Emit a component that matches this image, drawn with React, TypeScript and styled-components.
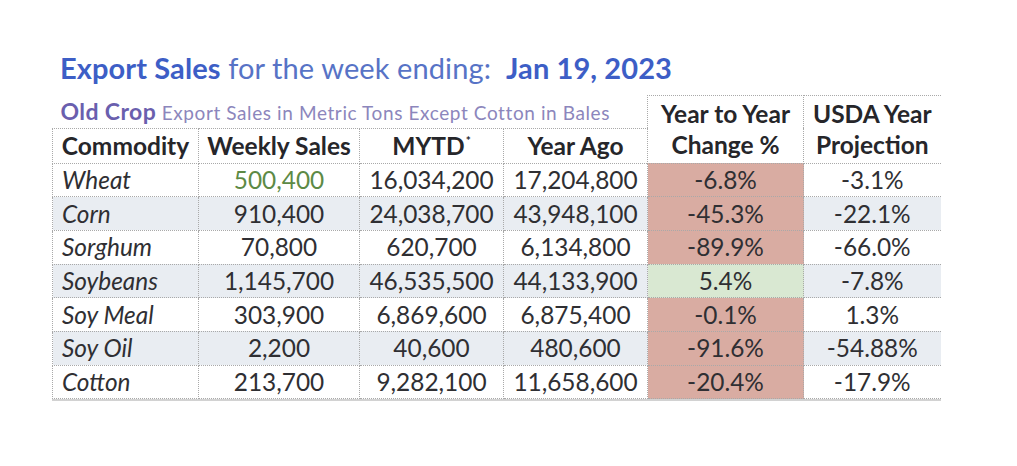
import React from "react";
import styled, { createGlobalStyle } from "styled-components";

const GlobalStyle = createGlobalStyle`
  html, body {
    margin: 0;
    padding: 0;
    background: #ffffff;
  }
  body {
    font-family: Lato, "Open Sans", "Liberation Sans", sans-serif;
  }
`;

interface Row {
  name: string;
  weekly: string;
  mytd: string;
  ago: string;
  change: string;
  usda: string;
  up?: boolean;
  shaded?: boolean;
  greenWeekly?: boolean;
}

const rows: Row[] = [
  { name: "Wheat", weekly: "500,400", mytd: "16,034,200", ago: "17,204,800", change: "-6.8%", usda: "-3.1%", greenWeekly: true },
  { name: "Corn", weekly: "910,400", mytd: "24,038,700", ago: "43,948,100", change: "-45.3%", usda: "-22.1%", shaded: true },
  { name: "Sorghum", weekly: "70,800", mytd: "620,700", ago: "6,134,800", change: "-89.9%", usda: "-66.0%" },
  { name: "Soybeans", weekly: "1,145,700", mytd: "46,535,500", ago: "44,133,900", change: "5.4%", usda: "-7.8%", up: true, shaded: true },
  { name: "Soy Meal", weekly: "303,900", mytd: "6,869,600", ago: "6,875,400", change: "-0.1%", usda: "1.3%" },
  { name: "Soy Oil", weekly: "2,200", mytd: "40,600", ago: "480,600", change: "-91.6%", usda: "-54.88%", shaded: true },
  { name: "Cotton", weekly: "213,700", mytd: "9,282,100", ago: "11,658,600", change: "-20.4%", usda: "-17.9%" },
];

const App: React.FC = () => {
  return (
    <Page>
      <GlobalStyle />
      <Title>
        <strong>Export Sales</strong> for the week ending:&nbsp;&nbsp;<strong>Jan 19, 2023</strong>
      </Title>
      <Table>
        <colgroup>
          <col style={{ width: 146 }} />
          <col style={{ width: 161 }} />
          <col style={{ width: 144 }} />
          <col style={{ width: 144 }} />
          <col style={{ width: 156 }} />
          <col style={{ width: 137 }} />
        </colgroup>
        <thead>
          <tr>
            <Caption colSpan={4}>
              <strong>Old Crop</strong> Export Sales in Metric Tons Except Cotton in Bales
            </Caption>
            <Head rowSpan={2} $top>
              Year to Year
              <br />
              Change %
            </Head>
            <Head rowSpan={2} $top $last>
              USDA Year
              <br />
              Projection
            </Head>
          </tr>
          <tr>
            <Head>Commodity</Head>
            <Head>Weekly Sales</Head>
            <Head>
              MYTD<Star>*</Star>
            </Head>
            <Head>Year Ago</Head>
          </tr>
        </thead>
        <tbody>
          {rows.map((r) => (
            <BodyRow key={r.name} $shaded={r.shaded}>
              <Name>{r.name}</Name>
              <Num $green={r.greenWeekly}>{r.weekly}</Num>
              <Num>{r.mytd}</Num>
              <Num>{r.ago}</Num>
              <Change $up={r.up}>{r.change}</Change>
              <Num $last>{r.usda}</Num>
            </BodyRow>
          ))}
        </tbody>
      </Table>
    </Page>
  );
};

export default App;

const Page = styled.div`
  width: 1017px;
  height: 466px;
  padding: 48px 0 0 52px;
  box-sizing: border-box;
  display: flex;
  flex-direction: column;
`;

const Title = styled.div`
  font-size: 29px;
  line-height: 40px;
  letter-spacing: 0.1px;
  color: #5773c6;
  padding-left: 8px;
  margin-bottom: 7px;
  white-space: nowrap;

  strong {
    font-weight: 700;
    color: #3d5ec6;
  }
`;

const Table = styled.table`
  border-collapse: collapse;
  table-layout: fixed;
  width: 888px;
  color: #2f2f33;
  box-shadow: 0 2px 0 #d2d2d2;
`;

const dotted = "1px dotted #a9a9a9";

const Caption = styled.th`
  text-align: left;
  font-weight: 400;
  font-size: 19px;
  letter-spacing: 0.6px;
  color: #8c86bc;
  padding: 0 0 0 8px;
  height: 32px;
  line-height: 28px;
  white-space: nowrap;
  border-bottom: ${dotted};

  strong {
    font-size: 23px;
    letter-spacing: 0.4px;
    font-weight: 700;
    color: #6a5fae;
  }
`;

const Head = styled.th<{ $top?: boolean; $last?: boolean }>`
  font-size: 24.5px;
  font-weight: 700;
  line-height: 31px;
  height: 34px;
  padding: 0;
  color: #26262a;
  white-space: nowrap;
  text-align: center;
  border-top: ${(p) => (p.$top ? dotted : "none")};
  border-left: ${dotted};
  border-right: ${(p) => (p.$last ? "none" : dotted)};
  border-bottom: ${dotted};
  background: #ffffff;
`;

const Star = styled.span`
  font-size: 12px;
  line-height: 0;
  position: relative;
  top: -10px;
  margin-left: 1px;
`;

const BodyRow = styled.tr<{ $shaded?: boolean }>`
  height: 33.7px;
  background: ${(p) => (p.$shaded ? "#e9edf2" : "#ffffff")};
`;

const Cell = styled.td`
  font-size: 24.4px;
  line-height: 30px;
  padding: 0;
  border-left: ${dotted};
  border-right: ${dotted};
  border-bottom: ${dotted};
  white-space: nowrap;
`;

const Name = styled(Cell)`
  font-style: italic;
  text-align: left;
  padding-left: 9px;
`;

const Num = styled(Cell)<{ $green?: boolean; $last?: boolean }>`
  text-align: center;
  color: ${(p) => (p.$green ? "#5d8a45" : "#2f2f33")};
  border-right: ${(p) => (p.$last ? "none" : dotted)};
`;

const Change = styled(Cell)<{ $up?: boolean }>`
  text-align: center;
  background: ${(p) => (p.$up ? "#d9e8d2" : "#d9aca2")};
`;
